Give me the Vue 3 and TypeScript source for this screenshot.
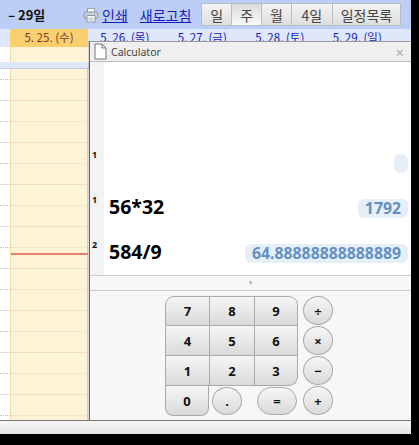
<script setup lang="ts">
const views = [
  { label: '일' },
  { label: '주', active: true },
  { label: '월' },
  { label: '4일' },
  { label: '일정목록' }
]
const days = ['5. 26. (목)', '5. 27. (금)', '5. 28. (토)', '5. 29. (일)']
const slots = Array.from({ length: 18 }, (_, i) => i)
const keypad = ['7', '8', '9', '4', '5', '6', '1', '2', '3']
const ops = ['÷', '×', '−', '+']
const entries = [
  { mark: '1', expr: '', result: '' },
  { mark: '1', expr: '56*32', result: '1792' },
  { mark: '2', expr: '584/9', result: '64.88888888888889' }
]
</script>

<template>
  <div class="screen">
    <div class="desk">
      <header class="topbar">
        <span class="range">– 29일</span>
        <svg class="printer" width="16" height="16" viewBox="0 0 16 16">
          <rect x="4.5" y="1.5" width="7" height="4" fill="#fff" stroke="#9aa2ae" />
          <rect x="1" y="5" width="14" height="6.5" rx="2" fill="#c9ced8" stroke="#8e97a5" />
          <rect x="4" y="8.5" width="8" height="6.5" fill="#fff" stroke="#8e97a5" />
          <path d="M5.5 11H10.5M5.5 13H10.5" stroke="#aab1bd" />
        </svg>
        <a class="link print">인쇄</a>
        <a class="link refresh">새로고침</a>
        <div class="views">
          <button v-for="v in views" :key="v.label" class="view" :class="{ active: v.active }">{{ v.label }}</button>
        </div>
      </header>
      <div class="dayhead">
        <div class="stub"></div>
        <div class="today">5. 25. (수)</div>
        <div v-for="d in days" :key="d" class="day">{{ d }}</div>
      </div>
      <div class="allday">
        <div class="stub"></div>
        <div class="todaycell"></div>
      </div>
      <div class="strip"></div>
      <div class="grid">
        <div class="slots">
          <div v-for="s in slots" :key="s" class="slot" :class="{ half: s % 2 === 0 }">
            <div class="slotstub"></div>
            <div class="slotday"></div>
          </div>
        </div>
        <div class="nowline"></div>
      </div>
      <footer class="statusbar"></footer>

      <section class="window">
        <div class="titlebar">
          <svg class="doc" width="13" height="17" viewBox="0 0 13 17">
            <path d="M1 1H8L12 5V16H1Z M8 1V5H12" fill="#fff" stroke="#777" />
          </svg>
          <span class="title">Calculator</span>
          <span class="close">×</span>
        </div>
        <div class="sheet">
          <div class="entry" v-for="(e, i) in entries" :key="i">
            <div class="gutter"><span class="mark">{{ e.mark }}</span></div>
            <div class="line">
              <span class="expr">{{ e.expr }}</span>
              <span class="result" :class="{ blank: !e.result }">{{ e.result }}</span>
            </div>
          </div>
        </div>
        <div class="handle">+</div>
        <div class="pad">
          <div class="keys">
            <div class="digits">
              <button v-for="k in keypad" :key="k" class="key">{{ k }}</button>
            </div>
            <div class="lastrow">
              <button class="key zero">0</button>
              <button class="round dot">.</button>
              <button class="equals">=</button>
            </div>
          </div>
          <div class="ops">
            <button v-for="o in ops" :key="o" class="round">{{ o }}</button>
          </div>
        </div>
      </section>
    </div>
  </div>
</template>

<style scoped>
.screen {
  width: 419px;
  height: 445px;
  background: #000;
  overflow: hidden;
}
.desk {
  position: relative;
  width: 411px;
  height: 434px;
  background: #fff;
  display: flex;
  flex-direction: column;
  font-family: "Noto Sans CJK KR", "Noto Sans", sans-serif;
  overflow: hidden;
}
.topbar {
  height: 29px;
  flex: none;
  background: #bccdf6;
  display: flex;
  align-items: center;
  padding-left: 8px;
}
.range {
  font-weight: 700;
  font-size: 13px;
  color: #111;
  width: 75px;
}
.printer {
  flex: none;
}
.link {
  color: #1a1ab8;
  text-decoration: underline;
  font-size: 14px;
}
.print {
  margin-left: 3px;
}
.refresh {
  margin-left: 12px;
}
.views {
  display: flex;
  margin-left: 10px;
  border: 1px solid #b8bcc4;
}
.view {
  height: 21px;
  padding: 0 8px;
  border: 0;
  border-right: 1px solid #b8bcc4;
  background: linear-gradient(#f4f4f4, #dedede);
  font: 14px "Noto Sans CJK KR", sans-serif;
  color: #444;
}
.view:nth-child(4) {
  padding: 0 9.5px;
}
.view:last-child {
  border-right: 0;
}
.view.active {
  background: linear-gradient(#dcdcdc, #f8f8f8);
}
.dayhead {
  height: 18px;
  flex: none;
  display: flex;
  background: #dfe7fb;
  font-size: 11.5px;
}
.stub {
  width: 10px;
  flex: none;
}
.today {
  width: 78px;
  box-sizing: border-box;
  background: #f9cf6f;
  text-align: center;
  color: #7a3a2a;
  line-height: 17px;
}
.day {
  width: 77.5px;
  box-sizing: border-box;
  padding-right: 4px;
  text-align: center;
  color: #1a1ab8;
  line-height: 16px;
  flex: none;
  white-space: nowrap;
}
.allday {
  height: 15px;
  flex: none;
  display: flex;
}
.todaycell {
  width: 78px;
  flex: none;
  box-sizing: border-box;
  background: #fff4d6;
  border-left: 1px solid #f2dc9f;
}
.strip {
  height: 7px;
  flex: none;
  box-sizing: border-box;
  background: #dfe7fb;
  border-bottom: 1px solid #c4cbe0;
}
.grid {
  height: 351px;
  flex: none;
  overflow: hidden;
  position: relative;
}
.slots {
  margin-top: -10px;
}
.slot {
  height: 21px;
  display: flex;
}
.slotstub,
.slotday {
  box-sizing: border-box;
  height: 21px;
  flex: none;
}
.slotstub {
  width: 10px;
  border-bottom: 1px solid #ddd;
}
.slotday {
  width: 78px;
  background: #fff4d6;
  border-left: 1px solid #f2dc9f;
  border-right: 1px solid #d8cda8;
  border-bottom: 1px solid #e8dfc4;
}
.slot.half .slotstub {
  border-bottom: 1px dotted #c4c4c4;
}
.slot.half .slotday {
  border-bottom: 1px dotted #e5d9b0;
}
.nowline {
  position: absolute;
  left: 11px;
  top: 184px;
  width: 77px;
  height: 2px;
  background: #e88070;
}
.statusbar {
  height: 14px;
  flex: none;
  box-sizing: border-box;
  background: linear-gradient(#f6f6f6, #e6e6e6);
  border-top: 1px solid #777;
}
.window {
  position: absolute;
  left: 89px;
  top: 41px;
  width: 322px;
  height: 379px;
  box-sizing: border-box;
  background: #f7f7f7;
  border-left: 1px solid #666;
  border-top: 1px solid #999;
  box-shadow: -1px 0 0 rgba(0, 0, 0, 0.15);
  display: flex;
  flex-direction: column;
}
.titlebar {
  height: 20px;
  flex: none;
  box-sizing: border-box;
  background: #efefef;
  border-bottom: 1px solid #bbb;
  display: flex;
  align-items: center;
  padding-left: 4px;
  font-family: "Noto Sans", sans-serif;
}
.doc {
  flex: none;
}
.title {
  margin-left: 4px;
  font-size: 10.5px;
  color: #444;
}
.close {
  margin-left: auto;
  margin-right: 7px;
  font-size: 15px;
  color: #aaa;
}
.sheet {
  height: 213px;
  flex: none;
  background: #fff;
  display: flex;
  flex-direction: column;
  justify-content: flex-end;
  font-family: "Noto Sans", sans-serif;
}
.entry {
  display: flex;
  height: 45px;
  flex: none;
}
.entry:first-child {
  flex: 1;
  height: auto;
}
.gutter {
  width: 14px;
  flex: none;
  background: #f3f3f3;
  font-size: 9px;
  font-weight: 700;
  line-height: 12px;
  color: #111;
  padding: 9px 0 0 2px;
  box-sizing: border-box;
}
.entry:first-child .gutter {
  display: flex;
  align-items: flex-end;
  padding-bottom: 24px;
}
.mark {
  display: block;
}
.line {
  flex: 1;
  display: flex;
  justify-content: space-between;
  align-items: flex-start;
  padding: 10px 3px 0 5px;
}
.entry:first-child .line {
  align-items: flex-end;
  padding-bottom: 12px;
}
.expr {
  font-weight: 700;
  font-size: 19.5px;
  color: #000;
  line-height: 24px;
}
.result {
  margin-top: 4px;
  background: #e6eef8;
  color: #6291c1;
  font-weight: 700;
  font-size: 15.8px;
  line-height: 19px;
  border-radius: 6px;
  padding: 0 7px;
}
.result.blank {
  width: 14px;
  height: 19px;
  box-sizing: border-box;
  padding: 0;
}
.handle {
  height: 15px;
  flex: none;
  box-sizing: border-box;
  border-top: 1px solid #ccc;
  font-size: 8px;
  line-height: 13px;
  text-align: center;
  color: #888;
  font-family: "Noto Sans", sans-serif;
}
.pad {
  flex: none;
  height: 130px;
  box-sizing: border-box;
  border-top: 1px solid #ccc;
  display: flex;
  gap: 5px;
  padding: 5px 0 0 75px;
  font-family: "Noto Sans", sans-serif;
}
.keys {
  width: 133px;
}
.digits {
  display: grid;
  grid-template-columns: 45px 45px 43px;
  grid-auto-rows: 30px;
}
button {
  font-family: "Noto Sans", sans-serif;
  padding: 0;
}
.key,
.round,
.equals {
  background: linear-gradient(#f6f6f6, #d9d9d9);
  border: 1px solid #aaa;
  box-sizing: border-box;
  font-weight: 700;
  font-size: 13px;
  color: #111;
}
.digits .key {
  border-left: 0;
  border-top: 0;
}
.digits .key:nth-child(3n + 1) {
  border-left: 1px solid #aaa;
}
.digits .key:nth-child(-n + 3) {
  border-top: 1px solid #aaa;
}
.digits .key:nth-child(1) {
  border-top-left-radius: 9px;
}
.digits .key:nth-child(3) {
  border-top-right-radius: 9px;
}
.digits .key:nth-child(9) {
  border-bottom-right-radius: 9px;
}
.lastrow {
  display: flex;
}
.zero {
  width: 44px;
  height: 30px;
  border-top: 0;
  border-radius: 0 0 8px 8px;
}
.round {
  width: 30px;
  height: 29px;
  border-radius: 50%;
}
.dot {
  margin: 1px 0 0 3px;
  height: 28px;
}
.equals {
  height: 28px;
  width: 40px;
  margin: 1px 0 0 15px;
  border-radius: 14px;
}
.ops {
  display: flex;
  flex-direction: column;
  gap: 1px;
}
</style>
